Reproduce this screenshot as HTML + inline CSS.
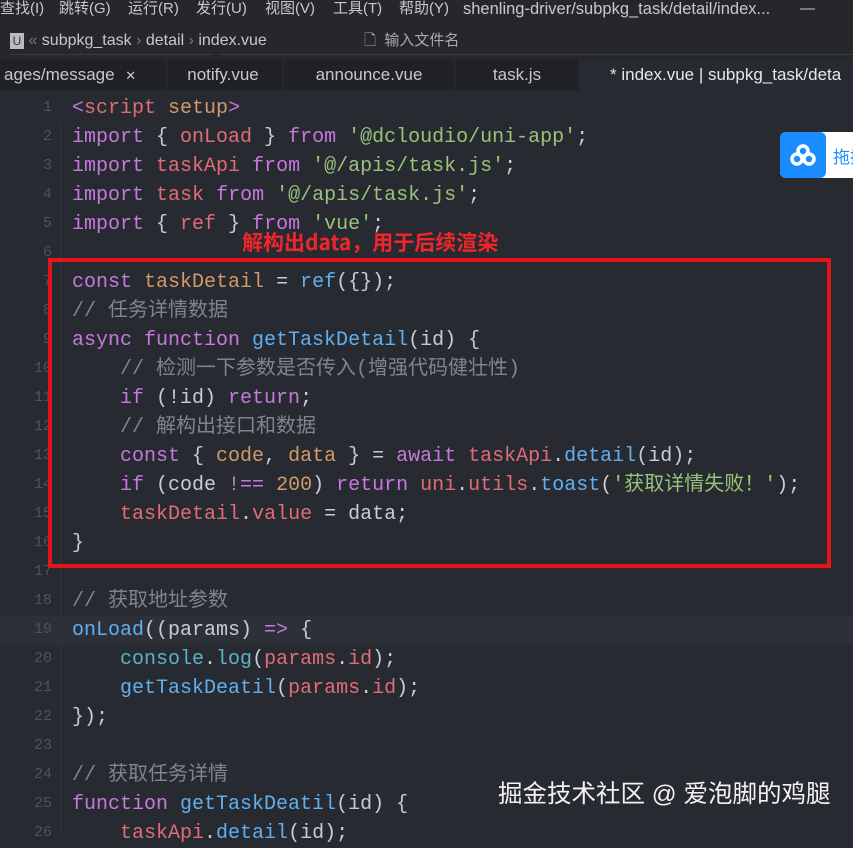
<!DOCTYPE html>
<html><head><meta charset="utf-8"><style>
body{margin:0;width:853px;height:830px;overflow:hidden;background:#282a31;font-family:"Liberation Sans","Noto Sans CJK SC",sans-serif;position:relative}
.top{position:absolute;left:0;top:0;width:853px;height:60px;background:#25272d}
.menu span{position:absolute;top:0;font-size:15px;color:#c8c8c8;white-space:nowrap;line-height:18px}
.bc{position:absolute;top:30px;left:10px;font-size:16px;color:#c8c8c8;line-height:22px;white-space:nowrap}
.tabs{position:absolute;top:60px;left:0;width:853px;height:30px;background:#1f2126}
.tab{position:absolute;top:0;height:30px;line-height:30px;font-size:17px;color:#c8c8c8;white-space:nowrap;border-right:1px solid #2c2e34}
.code{position:absolute;left:0;top:94px;width:853px}
.ln{position:absolute;left:0;width:52px;text-align:right;color:#4e535b;font-family:"Liberation Mono",monospace;font-size:15px}
.l{position:absolute;left:72px;font-family:"Liberation Mono","Noto Sans CJK SC",monospace;font-size:20px;color:#c8ccd4;white-space:pre;line-height:29px;height:29px}
.k{color:#c678dd}.v{color:#e06c75}.s{color:#98c379}.f{color:#61afef}.o{color:#d19a66}.c{color:#7f848e}.cy{color:#56b6c2}
</style></head><body>
<div class="top"></div>
<div class="menu"><span style="left:0">查找(I)</span><span style="left:59px">跳转(G)</span><span style="left:128px">运行(R)</span><span style="left:196px">发行(U)</span><span style="left:265px">视图(V)</span><span style="left:333px">工具(T)</span><span style="left:399px">帮助(Y)</span><span style="left:463px;font-size:16.5px">shenling-driver/subpkg_task/detail/index...</span><span style="left:800px">—</span></div>
<div class="bc"><span style="display:inline-block;width:14px;height:16px;background:#bbb;color:#333;font-size:12px;text-align:center;line-height:16px;vertical-align:middle">U</span> <span style="color:#777">«</span> subpkg_task <span style="color:#777">›</span> detail <span style="color:#777">›</span> index.vue</div>
<div style="position:absolute;top:54px;left:10px;width:203px;height:1px;background:#3a3c42"></div>
<div style="position:absolute;top:54px;left:219px;width:634px;height:1px;background:#3a3c42"></div>
<div style="position:absolute;top:30px;left:364px;font-size:15px;color:#aaa;line-height:22px">🗋&nbsp; 输入文件名</div>
<div class="tabs">
<div class="tab" style="left:0;width:162px;padding-left:4px">ages/message <span style="font-size:13px;margin-left:6px">✕</span></div>
<div class="tab" style="left:163px;width:120px;text-align:center">notify.vue</div>
<div class="tab" style="left:284px;width:170px;text-align:center">announce.vue</div>
<div class="tab" style="left:455px;width:124px;text-align:center">task.js</div>
<div class="tab" style="left:580px;width:273px;background:#282a31;color:#e8e8e8;padding-left:30px">* index.vue | subpkg_task/deta</div>
</div>
<div style="position:absolute;left:60px;top:122px;width:1px;height:710px;background:#34363d"></div>
<div style="position:absolute;left:0;top:616px;width:853px;height:29px;background:#2e3037"></div>
<div class="code" id="c"></div>
<script>
const lines=[
'<span class="k">&lt;</span><span class="v">script</span> <span class="o">setup</span><span class="k">&gt;</span>',
'<span class="k">import</span> { <span class="v">onLoad</span> } <span class="k">from</span> <span class="s">\'@dcloudio/uni-app\'</span>;',
'<span class="k">import</span> <span class="v">taskApi</span> <span class="k">from</span> <span class="s">\'@/apis/task.js\'</span>;',
'<span class="k">import</span> <span class="v">task</span> <span class="k">from</span> <span class="s">\'@/apis/task.js\'</span>;',
'<span class="k">import</span> { <span class="v">ref</span> } <span class="k">from</span> <span class="s">\'vue\'</span>;',
'',
'<span class="k">const</span> <span class="o">taskDetail</span> = <span class="f">ref</span>({});',
'<span class="c">// 任务详情数据</span>',
'<span class="k">async function</span> <span class="f">getTaskDetail</span>(id) {',
'    <span class="c">// 检测一下参数是否传入(增强代码健壮性)</span>',
'    <span class="k">if</span> (!id) <span class="k">return</span>;',
'    <span class="c">// 解构出接口和数据</span>',
'    <span class="k">const</span> { <span class="o">code</span>, <span class="o">data</span> } = <span class="k">await</span> <span class="v">taskApi</span>.<span class="f">detail</span>(id);',
'    <span class="k">if</span> (code <span class="k">!==</span> <span class="o">200</span>) <span class="k">return</span> <span class="v">uni</span>.<span class="v">utils</span>.<span class="f">toast</span>(<span class="s">\'获取详情失败！\'</span>);',
'    <span class="v">taskDetail</span>.<span class="v">value</span> = data;',
'}',
'',
'<span class="c">// 获取地址参数</span>',
'<span class="f">onLoad</span>((params) <span class="k">=&gt;</span> {',
'    <span class="cy">console</span>.<span class="cy">log</span>(<span class="v">params</span>.<span class="v">id</span>);',
'    <span class="f">getTaskDeatil</span>(<span class="v">params</span>.<span class="v">id</span>);',
'});',
'',
'<span class="c">// 获取任务详情</span>',
'<span class="k">function</span> <span class="f">getTaskDeatil</span>(id) {',
'    <span class="v">taskApi</span>.<span class="f">detail</span>(id);'];
let h='';lines.forEach((t,i)=>{const y=i*29;h+=`<div class="ln" style="top:${y+5}px">${i+1}</div><div class="l" style="top:${y}px">${t}</div>`;});
document.getElementById('c').innerHTML=h;
</script>
<div style="position:absolute;left:48px;top:258px;width:775px;height:302px;border:4px solid #e3151c"></div>
<div style="position:absolute;left:242px;top:228px;font-size:21px;font-weight:bold;color:#f0262a;font-family:'Noto Sans CJK SC',sans-serif;line-height:28px">解构出data，用于后续渲染</div>
<div style="position:absolute;left:780px;top:132px;width:80px;height:46px;background:#fff;border-radius:6px 0 0 6px"></div>
<div style="position:absolute;left:780px;top:132px;width:46px;height:46px;background:#1a8cff;border-radius:6px;display:flex;align-items:center;justify-content:center"><svg width="26" height="22" viewBox="0 0 26 22"><circle cx="13" cy="7" r="5" fill="none" stroke="#fff" stroke-width="3.5"/><circle cx="7" cy="15" r="5" fill="none" stroke="#fff" stroke-width="3.5"/><circle cx="19" cy="15" r="5" fill="none" stroke="#fff" stroke-width="3.5"/></svg></div>
<div style="position:absolute;left:833px;top:143px;font-size:17px;color:#1a8cff;white-space:nowrap">拖拽</div>
<div style="position:absolute;left:498px;top:775px;font-size:24.5px;color:#f2f2f2;white-space:nowrap">掘金技术社区 @ 爱泡脚的鸡腿</div>
</body></html>
